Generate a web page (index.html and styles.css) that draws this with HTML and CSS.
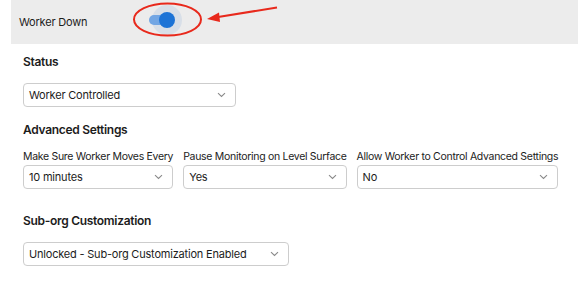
FILE: index.html
```html
<!DOCTYPE html>
<html>
<head>
    <meta charset="utf-8">
    <title>Worker Settings</title>
    <link rel="stylesheet" href="styles.css">
</head>
<body>
    <div class="page">
        <div class="top-bar">
            <span class="top-label">Worker Down</span>
            <div class="toggle">
                <div class="toggle-halo"></div>
                <div class="toggle-track"></div>
                <div class="toggle-thumb"></div>
            </div>
        </div>

        <!-- annotation over the toggle -->
        <svg class="annotation" width="578" height="44" viewBox="0 0 578 44">
            <ellipse cx="167.5" cy="19.5" rx="33.5" ry="16" fill="none" stroke="#e8291c" stroke-width="2"/>
            <line x1="277" y1="7.5" x2="215" y2="17.5" stroke="#e8291c" stroke-width="2"/>
            <polygon points="207,19 219,12.5 220,22" fill="#e8291c"/>
        </svg>

        <div class="section section-status">
            <div class="section-title">Status</div>
            <div class="select select-status">
                <span>Worker Controlled</span>
                <svg class="chevron" width="9" height="6" viewBox="0 0 9 6"><path d="M1 1.2 L4.5 4.5 L8 1.2" fill="none" stroke="#8a8a8a" stroke-width="1.1"/></svg>
            </div>
        </div>

        <div class="section section-advanced">
            <div class="section-title">Advanced Settings</div>
            <div class="field-row">
                <div class="field">
                    <div class="field-label">Make Sure Worker Moves Every</div>
                    <div class="select">
                        <span>10 minutes</span>
                        <svg class="chevron" width="9" height="6" viewBox="0 0 9 6"><path d="M1 1.2 L4.5 4.5 L8 1.2" fill="none" stroke="#8a8a8a" stroke-width="1.1"/></svg>
                    </div>
                </div>
                <div class="field">
                    <div class="field-label">Pause Monitoring on Level Surface</div>
                    <div class="select">
                        <span>Yes</span>
                        <svg class="chevron" width="9" height="6" viewBox="0 0 9 6"><path d="M1 1.2 L4.5 4.5 L8 1.2" fill="none" stroke="#8a8a8a" stroke-width="1.1"/></svg>
                    </div>
                </div>
                <div class="field">
                    <div class="field-label">Allow Worker to Control Advanced Settings</div>
                    <div class="select">
                        <span>No</span>
                        <svg class="chevron" width="9" height="6" viewBox="0 0 9 6"><path d="M1 1.2 L4.5 4.5 L8 1.2" fill="none" stroke="#8a8a8a" stroke-width="1.1"/></svg>
                    </div>
                </div>
            </div>
        </div>

        <div class="section section-sub">
            <div class="section-title">Sub-org Customization</div>
            <div class="select select-sub">
                <span>Unlocked - Sub-org Customization Enabled</span>
                <svg class="chevron" width="9" height="6" viewBox="0 0 9 6"><path d="M1 1.2 L4.5 4.5 L8 1.2" fill="none" stroke="#8a8a8a" stroke-width="1.1"/></svg>
            </div>
        </div>
    </div>
</body>
</html>
```

FILE: styles.css
```css
* {
    margin: 0;
    padding: 0;
    box-sizing: border-box;
}
body {
    background: #fff;
    font-family: Inter, "Noto Sans", sans-serif;
    color: #1c1c1c;
    width: 578px;
    height: 302px;
    overflow: hidden;
}
.page {
    position: relative;
    display: flex;
    flex-direction: column;
    align-items: flex-start;
}
.top-bar {
    align-self: stretch;
    margin-left: 11px;
    height: 44px;
    background: #ececec;
    display: flex;
    align-items: center;
    padding-left: 8px;
}
.top-label {
    font-size: 11px;
    letter-spacing: -0.2px;
    width: 128px;
    padding-bottom: 1px;
}
.toggle {
    position: relative;
    width: 36px;
    height: 30px;
    margin-bottom: 5px;
}
.toggle-halo {
    position: absolute;
    left: 5px;
    top: 0;
    width: 30px;
    height: 30px;
    border-radius: 50%;
    background: #d8dfe8;
}
.toggle-track {
    position: absolute;
    left: 2px;
    top: 10px;
    width: 22px;
    height: 10px;
    border-radius: 5px;
    background: #72a6e4;
}
.toggle-thumb {
    position: absolute;
    left: 12px;
    top: 7px;
    width: 16px;
    height: 16px;
    border-radius: 50%;
    background: #1c73d6;
}
.annotation {
    position: absolute;
    left: 0;
    top: 0;
}
.section {
    padding-left: 23px;
}
.section-status {
    padding-top: 9px;
}
.section-advanced {
    padding-top: 14px;
}
.section-sub {
    padding-top: 23px;
}
.section-title {
    font-size: 12px;
    font-weight: 600;
    letter-spacing: -0.3px;
    height: 18px;
    line-height: 18px;
    margin-bottom: 12px;
}
.select {
    height: 24px;
    border: 1px solid #cdcdcd;
    border-radius: 4px;
    display: flex;
    align-items: center;
    justify-content: space-between;
    padding: 0 9px 0 5px;
    font-size: 11px;
    letter-spacing: -0.2px;
    background: #fff;
}
.select-status {
    width: 213px;
}
.select-sub {
    width: 266px;
}
.chevron {
    display: block;
}
.field-row {
    display: flex;
    gap: 10px;
    margin-top: -2px;
}
.field-label {
    font-size: 10.5px;
    letter-spacing: -0.3px;
    height: 16px;
    line-height: 16px;
    white-space: nowrap;
}
```
